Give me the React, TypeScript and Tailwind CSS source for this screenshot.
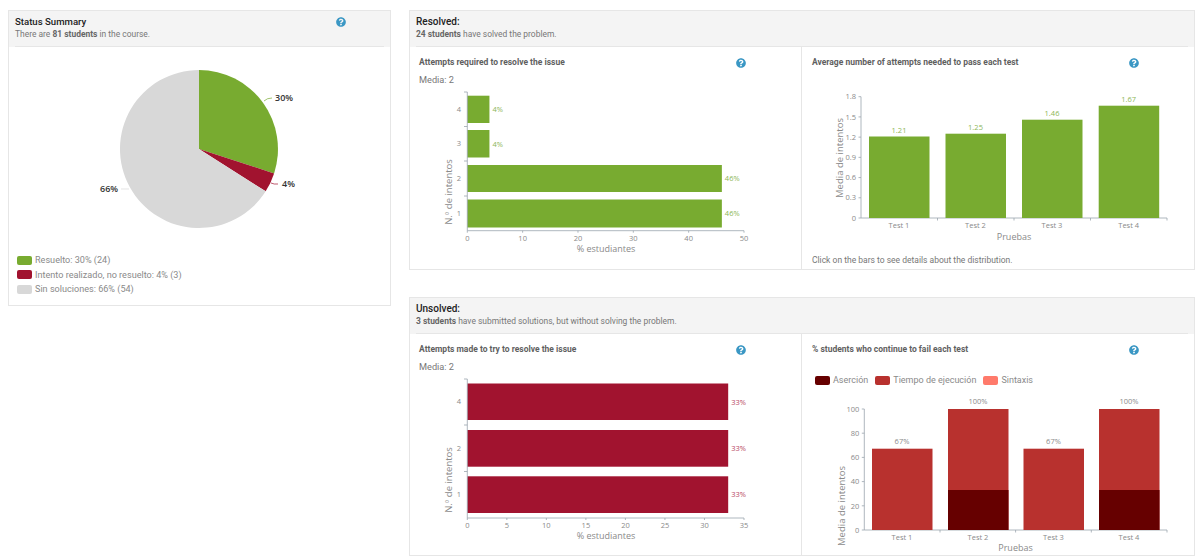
import React from "react";
import { FaQuestionCircle } from "react-icons/fa";

const GREEN = "#78ab30";
const CRIMSON = "#a1132f";
const FONT = "'Open Sans', sans-serif";
const AXIS = "#9aa5ad";
const LABEL = "#8a8a8a";

function Help() {
  return <FaQuestionCircle className="block w-[10px] h-[10px] text-[#3a97c4] shrink-0" />;
}

function Header({ title, children, helpWidth, titleClass }: { title: string; children: React.ReactNode; helpWidth?: string; titleClass: string }) {
  return (
    <div className="bg-[#f4f4f4] border-b border-[#e6e6e6] h-[36px] pt-[5px] font-['Roboto',sans-serif]">
      <div className="flex items-center">
        <div className={helpWidth ?? ""}>
          <h2 className={`${titleClass} leading-[12px] font-medium text-[#222]`}>{title}</h2>
        </div>
        {helpWidth ? <Help /> : null}
      </div>
      <p className="text-[8.45px] leading-[12px] text-[#777]">{children}</p>
    </div>
  );
}

function CardTitle({ title }: { title: string }) {
  return (
    <div className="flex items-center h-[12px] mt-[10px]">
      <h3 className="w-[317px] pb-[2px] text-[8.5px] font-bold text-[#5f5f5f] font-['Roboto',sans-serif]">{title}</h3>
      <Help />
    </div>
  );
}

function Txt(p: React.SVGProps<SVGTextElement>) {
  return <text fontFamily={FONT} fontSize={8} fill={LABEL} {...p} />;
}

function Rotated({ x, y, children }: { x: number; y: number; children: string }) {
  return (
    <text fontFamily={FONT} fontSize={9.5} fill="#8a8a8a" textAnchor="middle" transform={`translate(${x} ${y}) rotate(-90)`}>
      {children}
    </text>
  );
}

function HBars({
  top, bottom, right, maxV, step, bars, color, title, titleY, yTitleCenter, ticksY, valueColor,
}: {
  top: number; bottom: number; right: number; maxV: number; step: number;
  bars: { label: string; y0: number; y1: number; v: number; tickTop: number }[];
  color: string; title: string; titleY: number; yTitleCenter: number; ticksY: number; valueColor: string;
}) {
  const x0 = 467.3;
  const sx = (right - x0) / maxV;
  const ticks: number[] = [];
  for (let t = 0; t <= maxV; t += step) ticks.push(t);
  return (
    <>
      {bars.map((b) => (
        <g key={b.label}>
          <rect x={x0} y={b.y0} width={b.v * sx} height={b.y1 - b.y0} fill={color} />
          <Txt x={x0 + b.v * sx + 3} y={(b.y0 + b.y1) / 2 + 2.8} fontSize={7.5} fill={valueColor}>{b.v}%</Txt>
          <Txt x={461} y={(b.y0 + b.y1) / 2 + 2.5} textAnchor="end" fontSize={7.5}>{b.label}</Txt>
          <line x1={464} x2={x0} y1={b.tickTop} y2={b.tickTop} stroke={AXIS} strokeWidth={0.8} />
        </g>
      ))}
      <line x1={x0} x2={x0} y1={top} y2={bottom} stroke={AXIS} strokeWidth={0.8} />
      <line x1={x0} x2={right} y1={bottom} y2={bottom} stroke={AXIS} strokeWidth={0.8} />
      {ticks.map((t) => (
        <g key={t}>
          <line x1={x0 + t * sx} x2={x0 + t * sx} y1={bottom} y2={bottom + 2} stroke={AXIS} strokeWidth={0.8} />
          <Txt x={x0 + t * sx} y={ticksY} textAnchor="middle" fontSize={7.5}>{t}</Txt>
        </g>
      ))}
      <Rotated x={452} y={yTitleCenter}>N.º de intentos</Rotated>
      <Txt x={606} y={titleY} textAnchor="middle" fontSize={9}>{title}</Txt>
    </>
  );
}

function VAxis({
  x0, right, yTop, yBottom, labels, ticksX,
}: { x0: number; right: number; yTop: number; yBottom: number; labels: string[]; ticksX: number[] }) {
  const n = labels.length - 1;
  return (
    <>
      <line x1={x0} x2={x0} y1={yTop} y2={yBottom} stroke={AXIS} strokeWidth={0.8} />
      <line x1={x0} x2={right} y1={yBottom} y2={yBottom} stroke={AXIS} strokeWidth={0.8} />
      {labels.map((l, i) => {
        const y = yBottom - (i * (yBottom - yTop)) / n;
        return (
          <g key={l}>
            <line x1={x0 - 2.5} x2={x0} y1={y} y2={y} stroke={AXIS} strokeWidth={0.8} />
            <Txt x={x0 - 5} y={y + 2.7} textAnchor="end" fontSize={7.5}>{l}</Txt>
          </g>
        );
      })}
      {ticksX.map((t) => (
        <line key={t} x1={t} x2={t} y1={yBottom} y2={yBottom + 2.5} stroke={AXIS} strokeWidth={0.8} />
      ))}
    </>
  );
}

function LegendItem({ color, children }: { color: string; children: string }) {
  return (
    <div className="flex items-center gap-[3px]">
      <span className="block w-[15px] h-[9px] rounded-[2px]" style={{ backgroundColor: color }} />
      <span>{children}</span>
    </div>
  );
}

export default function App() {
  return (
    <div className="bg-white w-[1200px] h-[558px] overflow-hidden flex items-start pt-[10px] pl-[8px] font-['Roboto',sans-serif]">
      {/* Left */}
      <section className="w-[383px] h-[296px] border border-[#e6e6e6] mr-[18px] shrink-0">
        <div className="px-[6px] bg-[#f4f4f4]">
          <Header title="Status Summary" titleClass="text-[9.6px]" helpWidth="w-[321px]">
            There are <b className="font-bold text-[#666]">81 students</b> in the course.
          </Header>
        </div>
        <svg className="block" width={381} height={206} viewBox="9 47 381 206">
          <path d="M199 149 L199 70 A79 79 0 0 1 274.1 173.4 Z" fill={GREEN} />
          <path d="M199 149 L274.1 173.4 A79 79 0 0 1 265.7 191.3 Z" fill={CRIMSON} />
          <path d="M199 149 L265.7 191.3 A79 79 0 1 1 199 70 Z" fill="#d8d8d8" />
          <path d="M264 101 Q267 98 272 98" fill="none" stroke={GREEN} strokeWidth={0.7} />
          <path d="M271 183 Q274 184.5 278 184" fill="none" stroke={CRIMSON} strokeWidth={0.7} />
          <line x1={121} x2={129} y1={189} y2={189} stroke="#d8d8d8" strokeWidth={0.7} />
          <Txt x={275} y={101} fontSize={9} fontWeight={600} fill="#333">30%</Txt>
          <Txt x={282} y={187} fontSize={9} fontWeight={600} fill="#333">4%</Txt>
          <Txt x={100} y={191.5} fontSize={9} fontWeight={600} fill="#333">66%</Txt>
        </svg>
        <div className="pl-[8px] text-[9.1px] leading-[14.5px] text-[#8a8a8a]">
          <LegendItem color={GREEN}>Resuelto: 30% (24)</LegendItem>
          <LegendItem color={CRIMSON}>Intento realizado, no resuelto: 4% (3)</LegendItem>
          <LegendItem color="#d8d8d8">Sin soluciones: 66% (54)</LegendItem>
        </div>
      </section>

      {/* Right */}
      <div className="w-[786px] shrink-0 flex flex-col gap-[27px]">
        <section className="h-[260px] border border-[#e6e6e6] flex flex-col">
          <div className="px-[6px] bg-[#f4f4f4]">
            <Header title="Resolved:" titleClass="text-[10px]">
              <b className="font-bold text-[#666]">24 students</b> have solved the problem.
            </Header>
          </div>
          <div className="flex flex-1">
            <div className="w-[392px] border-r border-[#e6e6e6] pl-[9px]">
              <CardTitle title="Attempts required to resolve the issue" />
              <p className="text-[9.2px] leading-[12px] mt-[5px] text-[#777]">Media: 2</p>
              <svg className="block -ml-[9px]" width={391} height={176} viewBox="410 86 391 176">
                <HBars
                  top={92} bottom={230.7} right={744} maxV={50} step={10} color={GREEN} valueColor="#8db657"
                  title="% estudiantes" titleY={252} yTitleCenter={192} ticksY={241}
                  bars={[
                    { label: "4", y0: 95.7, y1: 123, v: 4, tickTop: 92 },
                    { label: "3", y0: 130, y1: 157.5, v: 4, tickTop: 126.5 },
                    { label: "2", y0: 165, y1: 192, v: 46, tickTop: 161 },
                    { label: "1", y0: 199.5, y1: 227.5, v: 46, tickTop: 196 },
                  ]}
                />
              </svg>
            </div>
            <div className="flex-1 pl-[10px]">
              <CardTitle title="Average number of attempts needed to pass each test" />
              <svg className="block -ml-[10px]" width={392} height={176} viewBox="802 69 392 176">
                <VAxis x0={861} right={1167} yTop={96.7} yBottom={218}
                  labels={["0", "0.3", "0.6", "0.9", "1.2", "1.5", "1.8"]}
                  ticksX={[937.5, 1014, 1090.5, 1167]} />
                {[
                  { n: "Test 1", x: 869, t: 136.5, v: "1.21" },
                  { n: "Test 2", x: 945.5, t: 133.7, v: "1.25" },
                  { n: "Test 3", x: 1022, t: 119.7, v: "1.46" },
                  { n: "Test 4", x: 1098.7, t: 105.7, v: "1.67" },
                ].map((b) => (
                  <g key={b.n}>
                    <rect x={b.x} y={b.t} width={60.5} height={218 - b.t} fill={GREEN} />
                    <Txt x={b.x + 30} y={b.t - 4} textAnchor="middle" fontSize={7.5} fill="#8db657">{b.v}</Txt>
                    <Txt x={b.x + 30} y={228} textAnchor="middle" fontSize={7.5}>{b.n}</Txt>
                  </g>
                ))}
                <Rotated x={843} y={158}>Media de intentos</Rotated>
                <Txt x={1014} y={240} textAnchor="middle" fontSize={9}>Pruebas</Txt>
              </svg>
              <p className="text-[8.5px] leading-[12px] mt-[9px] text-[#777]">Click on the bars to see details about the distribution.</p>
            </div>
          </div>
        </section>

        <section className="h-[259px] border border-[#e6e6e6] flex flex-col">
          <div className="px-[6px] bg-[#f4f4f4]">
            <Header title="Unsolved:" titleClass="text-[10px]">
              <b className="font-bold text-[#666]">3 students</b> have submitted solutions, but without solving the problem.
            </Header>
          </div>
          <div className="flex flex-1">
            <div className="w-[392px] border-r border-[#e6e6e6] pl-[9px]">
              <CardTitle title="Attempts made to try to resolve the issue" />
              <p className="text-[9.2px] leading-[12px] mt-[5px] text-[#777]">Media: 2</p>
              <svg className="block -ml-[9px]" width={391} height={176} viewBox="410 373 391 176">
                <HBars
                  top={379} bottom={518} right={744} maxV={35} step={5} color={CRIMSON} valueColor="#b8475f"
                  title="% estudiantes" titleY={539} yTitleCenter={480} ticksY={528}
                  bars={[
                    { label: "4", y0: 383.5, y1: 420, v: 33, tickTop: 379 },
                    { label: "2", y0: 430, y1: 466.7, v: 33, tickTop: 425 },
                    { label: "1", y0: 476.3, y1: 513, v: 33, tickTop: 471.5 },
                  ]}
                />
              </svg>
            </div>
            <div className="flex-1 pl-[10px]">
              <CardTitle title="% students who continue to fail each test" />
              <div className="flex gap-[7px] ml-[3px] mt-[18px] text-[9px] leading-[12px] text-[#8a8a8a]">
                <LegendItem color="#660000">Aserción</LegendItem>
                <LegendItem color="#b8312e">Tiempo de ejecución</LegendItem>
                <LegendItem color="#ff7a6b">Sintaxis</LegendItem>
              </div>
              <svg className="block -ml-[10px]" width={392} height={168} viewBox="802 386 392 168">
                <VAxis x0={864.3} right={1167} yTop={409} yBottom={530}
                  labels={["0", "20", "40", "60", "80", "100"]}
                  ticksX={[940, 1015.6, 1091.3, 1167]} />
                {[
                  { n: "Test 1", x: 872, t: 448.7, d: 0, v: "67%" },
                  { n: "Test 2", x: 948, t: 409, d: 490, v: "100%" },
                  { n: "Test 3", x: 1023.5, t: 448.7, d: 0, v: "67%" },
                  { n: "Test 4", x: 1099, t: 409, d: 490, v: "100%" },
                ].map((b) => (
                  <g key={b.n}>
                    <rect x={b.x} y={b.t} width={60.5} height={530 - b.t} fill="#b8312e" />
                    {b.d ? <rect x={b.x} y={b.d} width={60.5} height={530 - b.d} fill="#660000" /> : null}
                    <Txt x={b.x + 30} y={b.t - 5} textAnchor="middle" fontSize={7.5}>{b.v}</Txt>
                    <Txt x={b.x + 30} y={540} textAnchor="middle" fontSize={7.5}>{b.n}</Txt>
                  </g>
                ))}
                <Rotated x={845} y={506}>Media de intentos</Rotated>
                <Txt x={1015.5} y={551} textAnchor="middle" fontSize={9}>Pruebas</Txt>
              </svg>
            </div>
          </div>
        </section>
      </div>
    </div>
  );
}
